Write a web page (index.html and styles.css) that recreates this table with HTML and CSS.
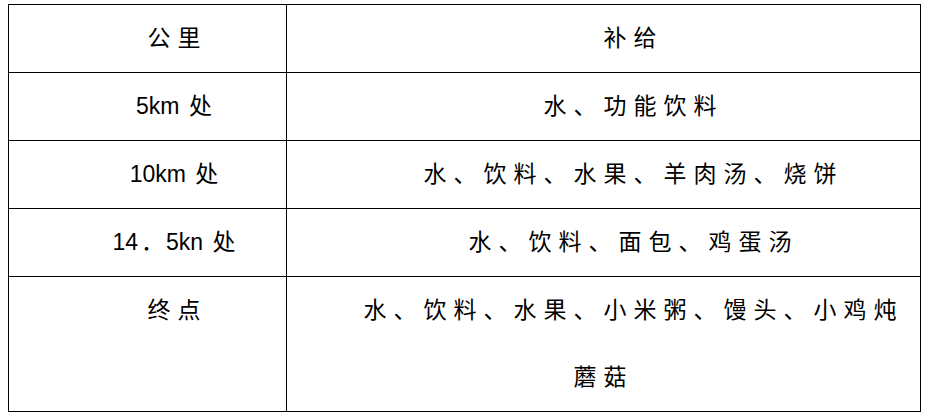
FILE: index.html
```html
<!DOCTYPE html>
<html lang="zh-CN">
<head>
<meta charset="utf-8">
<title>补给</title>
<link rel="stylesheet" href="styles.css">
</head>
<body>
<table class="supply">
  <colgroup><col class="c1"><col class="c2"></colgroup>
  <tr><td>公里</td><td>补给</td></tr>
  <tr><td><span class="lat">5km </span>处</td><td>水、功能饮料</td></tr>
  <tr><td><span class="lat">10km </span>处</td><td>水、饮料、水果、羊肉汤、烧饼</td></tr>
  <tr><td><span class="lat">14</span><span class="dot">．</span><span class="lat">5kn </span>处</td><td>水、饮料、面包、鸡蛋汤</td></tr>
  <tr><td class="top">终点</td><td>水、饮料、水果、小米粥、馒头、小鸡炖<br>蘑菇</td></tr>
</table>
</body>
</html>
```
FILE: styles.css
```css
html, body {
  background: #ffffff;
}
body {
  margin: 4px 0 0 8px;
}
.supply {
  border-collapse: collapse;
  width: 912px;
  table-layout: fixed;
  font-family: "Liberation Sans", "Noto Sans CJK SC", sans-serif;
  font-size: 23px;
  color: #000;
}
.c1 { width: 278px; }
.c2 { width: 634px; }
.supply td {
  border: 1px solid #000;
  padding: 0 7px;
  height: 67px;
  line-height: 67px;
  text-align: center;
  text-indent: 60px;
  letter-spacing: 7px;
  vertical-align: middle;
  white-space: nowrap;
}
.supply td.top {
  vertical-align: top;
}
.lat {
  letter-spacing: 0;
  font-size: 23px;
  margin-right: 3px;
}
.dot {
  letter-spacing: 0;
  margin-right: 2px;
}
```
